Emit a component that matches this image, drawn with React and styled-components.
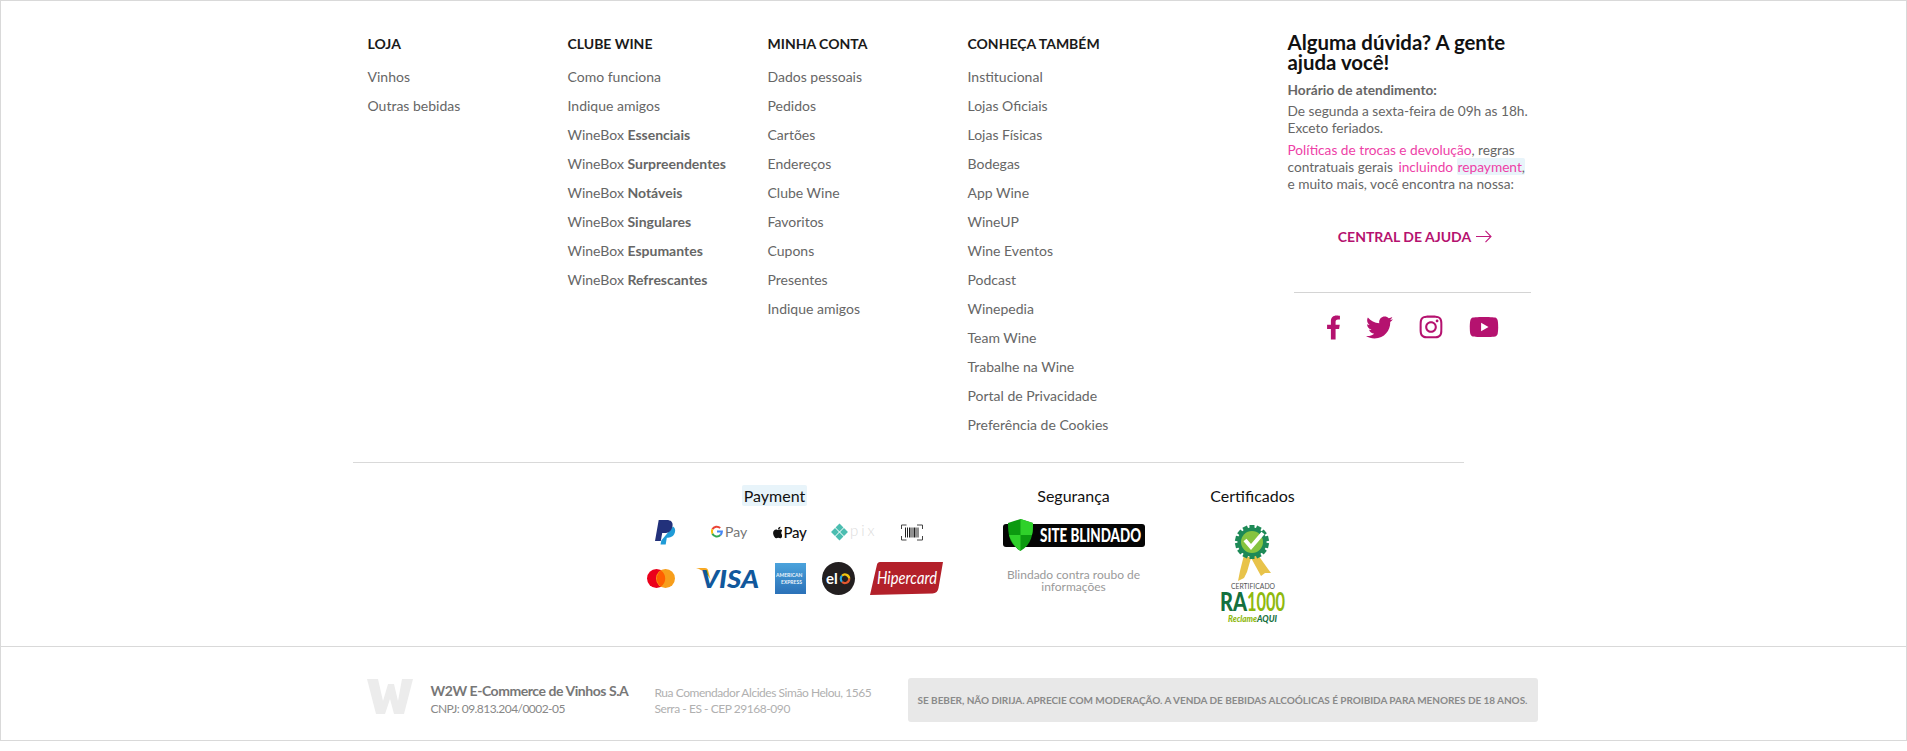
import React from "react";
import styled, { createGlobalStyle } from "styled-components";
import { FaFacebookF, FaTwitter, FaInstagram, FaYoutube, FaApple } from "react-icons/fa";

const Global = createGlobalStyle`
  html, body { margin: 0; padding: 0; background: #fff; }
  body { font-family: Lato, "Noto Sans", sans-serif; }
  * { box-sizing: border-box; }
`;

const Frame = styled.footer`
  border: 1px solid #d9d9d9;
  width: 100%;
  height: 741px;
  display: flex;
  flex-direction: column;
`;
const Container = styled.div`
  width: 1202px;
  margin: 0 auto;
`;
const LinksArea = styled.div`
  display: flex;
  padding: 34px 0 0 15px;
  height: 461px;
`;
const LinkColumn = styled.nav`
  width: 200px;
  display: flex;
  flex-direction: column;
`;
const ColumnTitle = styled.h4`
  margin: 0 0 10px;
  font-size: 14px;
  line-height: 17px;
  font-weight: 700;
  color: #1a1a1a;
`;
const FooterLink = styled.a`
  font-size: 14px;
  line-height: 29px;
  height: 29px;
  color: #666;
  b { font-weight: 700; }
`;
const HelpColumn = styled.aside`
  width: 250px;
  margin-left: 120px;
  display: flex;
  flex-direction: column;
  margin-top: -3px;
`;
const HelpTitle = styled.h3`
  margin: 0 0 9px;
  font-size: 20.4px;
  line-height: 20px;
  font-weight: 700;
  color: #111;
`;
const HelpText = styled.p`
  margin: 0 0 ${(p) => p.$after}px;
  width: 242px;
  font-size: 13.7px;
  line-height: 17px;
  color: #666;
  b { font-weight: 700; }
`;
const PinkLink = styled.span`
  color: #ee3fa7;
  margin-left: ${(p) => p.$nudge || 0}px;
`;
const Highlight = styled.span`
  background: #e8f4fa;
  border-radius: 2px;
  padding-left: 1px;
`;
const HelpComma = styled.span`
  color: #666;
`;
const HelpButton = styled.a`
  display: flex;
  align-items: center;
  justify-content: center;
  gap: 5px;
  margin: 34px 0 0;
  width: 250px;
  padding-left: 5px;
  height: 20px;
  font-size: 14px;
  font-weight: 700;
  color: #b5126f;
`;
const SocialRow = styled.div`
  margin: 46px 0 0 6px;
  width: 237px;
  border-top: 1px solid #d4d4d4;
  padding: 21px 0 0 32px;
  display: flex;
  align-items: center;
  gap: 25px;
  color: #b5126f;
  height: 48px;
`;
const Divider = styled.hr`
  margin: 0;
  border: 0;
  border-top: 1px solid #d9d9d9;
  width: 1111px;
`;
const SealsArea = styled.div`
  display: flex;
  padding: 23px 0 0 294px;
  height: 183px;
`;
const SealColumn = styled.section`
  width: ${(p) => p.$width}px;
  margin-right: ${(p) => p.$gap || 0}px;
  display: flex;
  flex-direction: column;
  align-items: ${(p) => p.$align || "center"};
`;
const SealTitle = styled.h5`
  margin: 0;
  font-size: 16px;
  line-height: 20px;
  font-weight: 400;
  color: #111;
  white-space: nowrap;
  padding-right: ${(p) => p.$shift || 0}px;
  align-self: center;
`;
const SoftMark = styled.span`
  background: #e8f4fa;
  border-radius: 2px;
  padding: 1px 2px;
`;
const LogoRow = styled.div`
  display: flex;
  align-items: center;
  height: ${(p) => p.$height}px;
  margin-top: ${(p) => p.$top}px;
`;
const Logo = styled.svg`
  display: block;
  flex: none;
  overflow: visible;
  margin-left: ${(p) => p.$left || 0}px;
`;
const ApplePay = styled.span`
  display: flex;
  align-items: center;
  gap: 1px;
  margin-left: 25px;
  font-size: 15px;
  font-weight: 500;
  color: #111;
  width: 34px;
  letter-spacing: -0.3px;
`;
const ShieldBadge = styled.svg`
  display: block;
  margin-top: 13px;
`;
const SealNote = styled.p`
  margin: 18px 0 0;
  width: 150px;
  text-align: center;
  font-size: 12px;
  line-height: 12px;
  color: #9a9a9a;
`;
const CertBadge = styled.svg`
  display: block;
  margin-top: 19px;
`;
const LegalBar = styled.div`
  border-top: 1px solid #d9d9d9;
  flex: 1;
`;
const LegalInner = styled.div`
  display: flex;
  align-items: flex-start;
  padding: 31px 0 0 14px;
`;
const Company = styled.div`
  margin: 3px 0 0 18px;
  width: 224px;
  font-size: 12px;
  line-height: 17px;
  color: #888;
  letter-spacing: -0.55px;
  strong {
    display: block;
    font-size: 14px;
    line-height: 19px;
    color: #777;
    letter-spacing: -0.45px;
  }
`;
const Address = styled.div`
  margin-top: 7px;
  width: 253px;
  font-size: 12px;
  line-height: 16px;
  color: #b0b0b0;
  letter-spacing: -0.45px;
`;
const Disclaimer = styled.div`
  width: 630px;
  height: 44px;
  border-radius: 3px;
  background: #e8e8e8;
  display: flex;
  align-items: center;
  justify-content: center;
  font-size: 10px;
  font-weight: 700;
  color: #8a8a8a;
  letter-spacing: -0.05px;
  white-space: nowrap;
`;

const columns = [
  { title: "LOJA", links: ["Vinhos", "Outras bebidas"] },
  {
    title: "CLUBE WINE",
    links: [
      "Como funciona",
      "Indique amigos",
      ["WineBox ", "Essenciais"],
      ["WineBox ", "Surpreendentes"],
      ["WineBox ", "Notáveis"],
      ["WineBox ", "Singulares"],
      ["WineBox ", "Espumantes"],
      ["WineBox ", "Refrescantes"],
    ],
  },
  {
    title: "MINHA CONTA",
    links: ["Dados pessoais", "Pedidos", "Cartões", "Endereços", "Clube Wine", "Favoritos", "Cupons", "Presentes", "Indique amigos"],
  },
  {
    title: "CONHEÇA TAMBÉM",
    links: ["Institucional", "Lojas Oficiais", "Lojas Físicas", "Bodegas", "App Wine", "WineUP", "Wine Eventos", "Podcast", "Winepedia", "Team Wine", "Trabalhe na Wine", "Portal de Privacidade", "Preferência de Cookies"],
  },
];

const PayPal = () => (
  <Logo $left={8} width="21" height="25" viewBox="0 0 21 25">
    <path fill="#1f9bd7" d="M18 6.500c1.800 1 2.600 3 2 5.600-.9 3.900-3.600 5.600-7 5.600h-1.200l-1.100 6.800H5.500l.8-4z" />
    <path fill="#22317b" d="M3.700 0h8c4 0 6.600 2 5.800 6.200-.9 4.700-4 6.900-8 6.900H7.200L5.800 21H0z" />
  </Logo>
);
const GPay = () => (
  <Logo $left={34} width="38" height="16" viewBox="0 0 38 16">
    <path fill="none" stroke="#ea4335" strokeWidth="2" d="M10.200 4A5 5 0 0 0 2.400 5.300" />
    <path fill="none" stroke="#fbbc04" strokeWidth="2" d="M2.400 5.300a5 5 0 0 0 0 4.400" />
    <path fill="none" stroke="#34a853" strokeWidth="2" d="M2.400 9.700A5 5 0 0 0 10.400 11" />
    <path fill="none" stroke="#4285f4" strokeWidth="2" d="M10.400 11a5 5 0 0 0 1.500-3.500H7" />
    <text x="15" y="13" fontFamily="Lato, sans-serif" fontSize="14" fill="#757575">Pay</text>
  </Logo>
);
const Pix = () => (
  <Logo $left={23} width="44" height="17" viewBox="0 0 44 17">
    <g fill="#4bbdb0">
      <rect x="2.200" y="5.200" width="5.600" height="5.600" transform="rotate(45 5 8)" />
      <rect x="6.700" y="0.700" width="5.600" height="5.600" transform="rotate(45 9.500 3.500)" />
      <rect x="6.700" y="9.700" width="5.600" height="5.600" transform="rotate(45 9.500 12.500)" />
      <rect x="11.200" y="5.200" width="5.600" height="5.600" transform="rotate(45 14 8)" />
    </g>
    <text x="20" y="12" fontFamily="Lato, sans-serif" fontWeight="300" fontSize="15" letterSpacing="3" fill="#dcdcdc">pix</text>
  </Logo>
);
const Barcode = () => (
  <Logo $left={27} width="22" height="17" viewBox="0 0 22 17">
    <path fill="none" stroke="#444" strokeWidth="1" d="M.5 5V1h5M16 1h5.500v4M.5 12v4h5M16 16h5.500v-4" />
    <path stroke="#222" d="M4.500 3.500v10M6.500 3.500v10M8.500 3.500v10M10 3.500v10M12 3.500v10M13.500 3.500v10M15 3.500v10M17 3.500v10" />
  </Logo>
);
const Mastercard = () => (
  <Logo width="28" height="19" viewBox="0 0 28 19">
    <circle cx="9.500" cy="9.500" r="9.500" fill="#eb001b" />
    <circle cx="18.500" cy="9.500" r="9.500" fill="#f79e1b" />
    <path fill="#ff5f00" d="M14 1.600a9.500 9.500 0 0 1 0 15.800 9.500 9.500 0 0 1 0-15.800z" />
  </Logo>
);
const Visa = () => (
  <Logo $left={21} width="66" height="24" viewBox="0 0 66 24">
    <path fill="#f7a823" d="M0 2h9c1.500 0 2.500.8 3 2l2.600 10C12 8 7 4 0 2z" />
    <text x="5" y="22" fontFamily="Lato, sans-serif" fontWeight="900" fontStyle="italic" fontSize="25" textLength="58" lengthAdjust="spacingAndGlyphs" fill="#11589c">VISA</text>
  </Logo>
);
const Amex = () => (
  <Logo $left={13} width="31" height="31" viewBox="0 0 31 31">
    <defs>
      <linearGradient id="amex" x1="0" y1="0" x2="0" y2="1">
        <stop offset="0" stopColor="#4ba3dc" />
        <stop offset="1" stopColor="#2b71b8" />
      </linearGradient>
    </defs>
    <rect width="31" height="31" fill="url(#amex)" />
    <text x="1" y="14" fontFamily="Lato, sans-serif" fontWeight="700" fontSize="5" fill="#eaf4fb">AMERICAN</text>
    <text x="6" y="21" fontFamily="Lato, sans-serif" fontWeight="700" fontSize="5" fill="#eaf4fb">EXPRESS</text>
  </Logo>
);
const Elo = () => (
  <Logo $left={16} width="33" height="33" viewBox="0 0 33 33">
    <circle cx="16.500" cy="16.500" r="16.500" fill="#231f20" />
    <text x="4" y="21.500" fontFamily="Lato, sans-serif" fontWeight="700" fontSize="15" fill="#fff">el</text>
    <path fill="none" stroke="#f1c40f" strokeWidth="2.200" d="M20 13.800A4.200 4.200 0 0 1 27.200 16.800" />
    <path fill="none" stroke="#e4572e" strokeWidth="2.200" d="M27.200 16.800A4.200 4.200 0 0 1 20 19.800" />
    <path fill="none" stroke="#29a8df" strokeWidth="2.200" d="M20 19.800A4.200 4.200 0 0 1 20 13.800" />
  </Logo>
);
const Hipercard = () => (
  <Logo $left={15} width="73" height="33" viewBox="0 0 73 33">
    <path fill="#b3202a" d="M7 2.500C7.400 1 8.500 0 10 0h63l-4.500 26c-.6 3.500-2.500 5-6 5.500L0 33z" />
    <text x="7" y="22" fontFamily="Lato, sans-serif" fontStyle="italic" fontSize="17" textLength="60" lengthAdjust="spacingAndGlyphs" fill="#fff">Hipercard</text>
  </Logo>
);

const SiteBlindado = () => (
  <ShieldBadge width="142" height="32" viewBox="0 0 142 32">
    <rect x="0" y="5" width="142" height="23" rx="3" fill="#050505" />
    <path fill="#0c9a10" d="M17.500 0l12.500 4c0 11-1 21-12.500 28C6 25 5 15 5 4z" />
    <path fill="#2fd12a" d="M17.500 0l12.500 4c0 4 0 8-1 12H17.500zM17.500 16H6c2 6 5 11 11.500 16z" />
    <text x="37" y="23" fontFamily="Lato, sans-serif" fontWeight="900" fontSize="18" textLength="101" lengthAdjust="spacingAndGlyphs" fill="#fff">SITE BLINDADO</text>
  </ShieldBadge>
);

const RosetteTeeth = Array.from({ length: 14 }, (_, i) => (i * 360) / 14);
const RA1000 = () => (
  <CertBadge width="66" height="100" viewBox="0 0 66 100">
    <path fill="#e8c34a" d="M24 30l-4 16-2 10 6-3 3-6 4-14zM38 30l10 14 3 4-6 0-4 3-11-20z" />
    <g transform="translate(8 0)">
      {RosetteTeeth.map((a) => (
        <rect key={a} x="21.500" y="0" width="5" height="6" fill="#1e8a57" transform={`rotate(${a} 24 17)`} />
      ))}
      <circle cx="24" cy="17" r="14.500" fill="#1e8a57" />
      <circle cx="24" cy="17" r="11" fill="#86c440" />
      <path fill="none" stroke="#fff" strokeWidth="4" d="M17 15l6 7 12-14" />
    </g>
    <text x="33" y="64" textAnchor="middle" fontFamily="Lato, sans-serif" fontSize="7" textLength="44" lengthAdjust="spacingAndGlyphs" fill="#555">CERTIFICADO</text>
    <text x="0" y="86" fontFamily="Lato, sans-serif" fontWeight="900" fontSize="27" textLength="27" lengthAdjust="spacingAndGlyphs" fill="#14703e">RA</text>
    <text x="27" y="86" fontFamily="Lato, sans-serif" fontWeight="700" fontSize="27" textLength="38" lengthAdjust="spacingAndGlyphs" fill="#8fb90f">1000</text>
    <text x="8" y="97" fontFamily="Lato, sans-serif" fontWeight="900" fontStyle="italic" fontSize="8.500" textLength="29" lengthAdjust="spacingAndGlyphs" fill="#8fb90f">Reclame</text>
    <text x="37" y="97" fontFamily="Lato, sans-serif" fontWeight="900" fontStyle="italic" fontSize="8.500" textLength="20" lengthAdjust="spacingAndGlyphs" fill="#14703e">AQUI</text>
  </CertBadge>
);

const WineMark = () => (
  <Logo width="46" height="37" viewBox="0 0 46 37">
    <path fill="#ececec" d="M0 1h11l5 22L21 6h6l4 17L35 1h11l-9 35H27l-4-15-5 15H9z" />
  </Logo>
);

const ArrowIcon = () => (
  <Logo width="16" height="13" viewBox="0 0 16 13">
    <path fill="none" stroke="#c01a7d" strokeWidth="1.100" d="M0 6.500h15M9.500 .8l5.500 5.700-5.500 5.700" />
  </Logo>
);

export default function App() {
  return (
    <>
      <Global />
      <Frame>
        <Container>
          <LinksArea>
            {columns.map((col) => (
              <LinkColumn key={col.title}>
                <ColumnTitle>{col.title}</ColumnTitle>
                {col.links.map((l) =>
                  Array.isArray(l) ? (
                    <FooterLink key={l[1]}>
                      {l[0]}
                      <b>{l[1]}</b>
                    </FooterLink>
                  ) : (
                    <FooterLink key={l}>{l}</FooterLink>
                  )
                )}
              </LinkColumn>
            ))}
            <HelpColumn>
              <HelpTitle>Alguma dúvida? A gente ajuda você!</HelpTitle>
              <HelpText $after={4}>
                <b>Horário de atendimento:</b>
              </HelpText>
              <HelpText $after={5}>
                De segunda a sexta-feira de 09h as 18h.
                <br />
                Exceto feriados.
              </HelpText>
              <HelpText $after={0}>
                <PinkLink>Políticas de trocas e devolução</PinkLink>, regras contratuais gerais{" "}
                <PinkLink $nudge={2}>
                  incluindo{" "}
                  <Highlight>
                    repayment<HelpComma>,</HelpComma>
                  </Highlight>
                </PinkLink>{" "}
                e muito mais, você encontra na nossa:
              </HelpText>
              <HelpButton>
                CENTRAL DE AJUDA
                <ArrowIcon />
              </HelpButton>
              <SocialRow>
                <FaFacebookF style={{ width: 15, height: 25 }} />
                <FaTwitter size={27} />
                <FaInstagram size={26} />
                <FaYoutube size={30} />
              </SocialRow>
            </HelpColumn>
          </LinksArea>
          <Divider />
          <SealsArea>
            <SealColumn $width={294} $gap={62} $align="flex-start">
              <SealTitle $shift={38}>
                <SoftMark>Payment</SoftMark>
              </SealTitle>
              <LogoRow $height={30} $top={11}>
                <PayPal />
                <GPay />
                <ApplePay>
                  <FaApple size={15} />
                  Pay
                </ApplePay>
                <Pix />
                <Barcode />
              </LogoRow>
              <LogoRow $height={34} $top={14}>
                <Mastercard />
                <Visa />
                <Amex />
                <Elo />
                <Hipercard />
              </LogoRow>
            </SealColumn>
            <SealColumn $width={142} $gap={65}>
              <SealTitle>Segurança</SealTitle>
              <SiteBlindado />
              <SealNote>Blindado contra roubo de informações</SealNote>
            </SealColumn>
            <SealColumn $width={86}>
              <SealTitle>Certificados</SealTitle>
              <RA1000 />
            </SealColumn>
          </SealsArea>
        </Container>
        <LegalBar>
          <Container>
            <LegalInner>
              <WineMark />
              <Company>
                <strong>W2W E-Commerce de Vinhos S.A</strong>
                CNPJ: 09.813.204/0002-05
              </Company>
              <Address>
                Rua Comendador Alcides Simão Helou, 1565
                <br />
                Serra - ES - CEP 29168-090
              </Address>
              <Disclaimer>
                SE BEBER, NÃO DIRIJA. APRECIE COM MODERAÇÃO. A VENDA DE BEBIDAS ALCOÓLICAS É PROIBIDA PARA MENORES DE 18 ANOS.
              </Disclaimer>
            </LegalInner>
          </Container>
        </LegalBar>
      </Frame>
    </>
  );
}
